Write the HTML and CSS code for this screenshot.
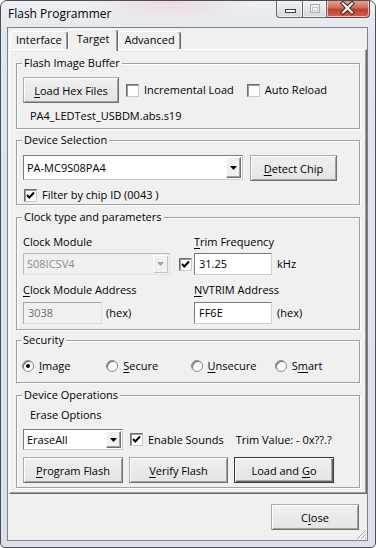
FILE: index.html
```html
<!DOCTYPE html>
<html lang="en">
<head>
    <meta charset="UTF-8" />
    <title>Flash Programmer</title>
    <link rel="stylesheet" href="styles.css">
</head>
<body>

    <div class="window">
        <div class="titlebar">
            <span class="title">Flash Programmer</span>
            <div class="caption">
                <div class="cap cap-min">
                    <svg width="25" height="17" viewBox="0 0 25 17"><rect x="8.5" y="9.5" width="10" height="3" fill="#fff" stroke="#3b4048"/></svg>
                </div>
                <div class="cap cap-max">
                    <svg width="25" height="17" viewBox="0 0 25 17"><rect x="7.5" y="4.5" width="9" height="8" fill="#eef0f3" stroke="#a9aeb5"/><rect x="9.5" y="7.5" width="5" height="3" fill="#fff" stroke="#c3c7cc"/></svg>
                </div>
                <div class="cap cap-close">
                    <svg width="42" height="17" viewBox="0 0 42 17">
                        <path d="M16 3.5 L25 12.5 M25 3.5 L16 12.5" stroke="#4a1e18" stroke-width="4.2" stroke-linecap="square"/>
                        <path d="M16 3.5 L25 12.5 M25 3.5 L16 12.5" stroke="#fff" stroke-width="2.2" stroke-linecap="square"/>
                    </svg>
                </div>
            </div>
        </div>

        <div class="client">
            <div class="tabs">
                <div class="tab">Interface</div>
                <div class="tab active">Target</div>
                <div class="tab">Advanced</div>
            </div>

            <div class="panel">
                <fieldset class="group g-image">
                    <legend>Flash Image Buffer</legend>
                    <div class="row">
                        <button class="btn btn-load"><u>L</u>oad Hex Files</button>
                        <label class="check check-inc"><span class="cb"></span>Incremental Load</label>
                        <label class="check check-auto"><span class="cb"></span>Auto Reload</label>
                    </div>
                    <div class="filename">PA4_LEDTest_USBDM.abs.s19</div>
                </fieldset>

                <fieldset class="group g-device">
                    <legend>Device Selection</legend>
                    <div class="row row-top">
                        <div class="combo combo-device">
                            <span class="combo-text">PA-MC9S08PA4</span>
                            <span class="combo-btn"><svg width="7" height="4" viewBox="0 0 7 4"><path d="M0 0H7L3.5 4Z" fill="#000"/></svg></span>
                        </div>
                        <button class="btn btn-detect"><u>D</u>etect Chip</button>
                    </div>
                    <label class="check check-filter">
                        <span class="cb checked"><svg width="11" height="11" viewBox="0 0 11 11"><path d="M2 5 L4.3 7.5 L9 2.5" fill="none" stroke="#000" stroke-width="1.9"/></svg></span>
                        Filter by chip ID (0043 )
                    </label>
                </fieldset>

                <fieldset class="group g-clock">
                    <legend>Clock type and parameters</legend>
                    <div class="clock-grid">
                        <span class="c-a">Clock Module</span>
                        <span class="c-cd"><u>T</u>rim Frequency</span>

                        <div class="combo combo-clock disabled c-a">
                            <span class="combo-text">S08ICSV4</span>
                            <span class="combo-btn"><svg width="7" height="4" viewBox="0 0 7 4"><path d="M0 0H7L3.5 4Z" fill="#a3a3a3"/></svg></span>
                        </div>
                        <span class="cb checked c-b"><svg width="11" height="11" viewBox="0 0 11 11"><path d="M2 5 L4.3 7.5 L9 2.5" fill="none" stroke="#000" stroke-width="1.9"/></svg></span>
                        <span class="field c-c">31.25</span>
                        <span class="unit unit-khz c-d">kHz</span>

                        <span class="c-a"><u>C</u>lock Module Address</span>
                        <span class="c-cd"><u>N</u>VTRIM Address</span>

                        <div class="c-a addr">
                            <span class="field field-addr disabled">3038</span>
                            <span class="unit">(hex)</span>
                        </div>
                        <span class="field c-c">FF6E</span>
                        <span class="unit c-d">(hex)</span>
                    </div>
                </fieldset>

                <fieldset class="group g-security">
                    <legend>Security</legend>
                    <div class="radios">
                        <label class="radio-item"><span class="radio on"></span><u>I</u>mage</label>
                        <label class="radio-item"><span class="radio"></span><u>S</u>ecure</label>
                        <label class="radio-item"><span class="radio"></span><u>U</u>nsecure</label>
                        <label class="radio-item"><span class="radio"></span>S<u>m</u>art</label>
                    </div>
                </fieldset>

                <fieldset class="group g-ops">
                    <legend>Device Operations</legend>
                    <div class="erase-label">Erase Options</div>
                    <div class="row">
                        <div class="combo combo-erase">
                            <span class="combo-text">EraseAll</span>
                            <span class="combo-btn"><svg width="7" height="4" viewBox="0 0 7 4"><path d="M0 0H7L3.5 4Z" fill="#000"/></svg></span>
                        </div>
                        <label class="check check-sounds">
                            <span class="cb checked"><svg width="11" height="11" viewBox="0 0 11 11"><path d="M2 5 L4.3 7.5 L9 2.5" fill="none" stroke="#000" stroke-width="1.9"/></svg></span>
                            Enable Sounds
                        </label>
                        <span class="trim-value">Trim Value: - 0x??.?</span>
                    </div>
                    <div class="row ops-buttons">
                        <button class="btn btn-op"><u>P</u>rogram Flash</button>
                        <button class="btn btn-op btn-verify"><u>V</u>erify Flash</button>
                        <button class="btn btn-op btn-default">Load and <u>G</u>o</button>
                    </div>
                </fieldset>
            </div>

            <div class="footer">
                <button class="btn btn-close">C<u>l</u>ose</button>
            </div>

            <svg class="grip" width="12" height="12" viewBox="0 0 12 12">
                <path d="M11 2 L2 11 M11 6 L6 11 M11 10 L10 11" stroke="#a7a7a7" stroke-width="1"/>
                <path d="M12 3 L3 12 M12 7 L7 12" stroke="#fff" stroke-width="1"/>
            </svg>
        </div>
    </div>

</body>
</html>
```

FILE: styles.css
```css
body {
    margin: 0;
    background: #fff;
    color: #000;
    font-family: "Open Sans", "Noto Sans", sans-serif;
    font-size: 11px;
}

u {
    text-decoration-thickness: 1px;
    text-underline-offset: 2px;
}

.window {
    width: 376px;
    height: 548px;
    box-sizing: border-box;
    border: 1px solid #4b5057;
    border-radius: 7px 7px 5px 5px;
    overflow: hidden;
    background:
        radial-gradient(ellipse 90px 22px at 170px 0, rgba(236, 205, 222, 0.7), transparent),
        linear-gradient(#eef1f5, #e1e6eb 40px, #dce1e7);
}

/* title bar */
.titlebar {
    height: 26px;
    display: flex;
    align-items: flex-start;
    padding-left: 7px;
}

.title {
    font-size: 12px;
    line-height: 16px;
    margin-top: 5px;
    color: #000;
}

.caption {
    display: flex;
    margin-left: auto;
    margin-right: 5px;
    margin-top: -1px;
    height: 18px;
}

.cap {
    box-sizing: border-box;
    height: 18px;
    border: 1px solid #5f6670;
    border-top: none;
    background: linear-gradient(#f4f6f8, #e3e7ec 50%, #d3d9e0);
    box-shadow: inset 0 0 0 1px rgba(255, 255, 255, 0.6);
}

.cap svg { display: block; }

.cap-min {
    width: 26px;
    border-radius: 0 0 0 4px;
    border-right: none;
}

.cap-max {
    width: 25px;
}

.cap-close {
    width: 43px;
    border-left: none;
    border-color: #7a3a32;
    border-radius: 0 0 4px 0;
    background: linear-gradient(#e9a89d, #d46a5b 45%, #c0402f 55%, #d0624e);
}

/* client area */
.client {
    position: relative;
    margin-left: 6px;
    width: 361px;
    height: 514px;
    box-sizing: border-box;
    border: 1px solid #7d838b;
    background: #f0f0f0;
}

.tabs {
    display: flex;
    align-items: flex-end;
    height: 22px;
    padding-left: 2px;
}

.tab {
    height: 18px;
    box-sizing: border-box;
    margin-bottom: 1px;
    padding: 0 5px;
    line-height: 16px;
    border: 1px solid;
    border-bottom: none;
    border-color: #fff #696969 transparent #fff;
    border-radius: 3px 3px 0 0;
    box-shadow: inset -1px 0 0 #a0a0a0;
    background: #f0f0f0;
}

.tab.active {
    position: relative;
    z-index: 1;
    height: 22px;
    margin-bottom: -1px;
    padding: 0 8px;
    line-height: 17px;
}

.panel {
    width: 358px;
    height: 445px;
    box-sizing: border-box;
    margin-left: 1px;
    margin-top: -1px;
    padding: 6px 0 0 6px;
    border: 1px solid;
    border-color: #fff #696969 #696969 #fff;
    box-shadow: inset -1px -1px 0 #a0a0a0;
}

/* group boxes */
.group {
    width: 344px;
    min-width: 0;
    box-sizing: border-box;
    margin: 0;
    padding: 0 0 0 6px;
    border: 1px solid #a0a0a0;
    box-shadow: inset 1px 1px 0 #fff, 1px 1px 0 #fff;
}

.group legend {
    margin-left: -1px;
    padding: 0 2px;
    line-height: 14px;
    background: #f0f0f0;
}

.g-image { height: 73px; padding-top: 7px; }
.g-device { height: 72px; padding-top: 8px; margin-top: 4px; }
.g-clock { height: 120px; padding-top: 11px; margin-top: 5px; }
.g-security { height: 50px; padding-top: 12px; margin-top: 3px; padding-left: 5px; }
.g-ops { height: 100px; padding-top: 6px; margin-top: 5px; }

.row {
    display: flex;
    align-items: center;
}

.row-top { align-items: flex-start; }

/* buttons */
.btn {
    font: inherit;
    color: #000;
    height: 26px;
    box-sizing: border-box;
    padding: 0;
    border: 1px solid #acacac;
    border-right-color: #6f6f6f;
    border-bottom-color: #6f6f6f;
    background: linear-gradient(#f0f0f0, #e4e4e4);
    box-shadow: inset 1px 1px 0 #fff, inset -1px -1px 0 #a3a3a3;
}

.btn-default {
    border: 1px solid #3a3a3a;
    box-shadow: inset 1px 1px 0 #fff, inset -1px -1px 0 #696969, inset -2px -2px 0 #a3a3a3;
}

.btn-load { width: 96px; }
.btn-detect { width: 87px; margin-left: 7px; }
.btn-op { width: 100px; }
.btn-verify { width: 99px; margin: 0 6px; }
.btn-close { width: 88px; }

/* check boxes */
.check {
    display: flex;
    align-items: center;
    line-height: 14px;
}

.cb {
    display: inline-flex;
    align-items: center;
    justify-content: center;
    width: 13px;
    height: 13px;
    box-sizing: border-box;
    margin-right: 5px;
    border: 1px solid;
    border-color: #6e6e6e #c9c9c9 #c9c9c9 #6e6e6e;
    box-shadow: inset 1px 1px 0 #9a9a9a;
    background: #fff;
}

.cb svg { display: block; }

.check-inc { margin-left: 7px; }
.check-auto { margin-left: 13px; }
.check-filter { margin-top: 7px; margin-left: 1px; }
.check-sounds { margin-left: 7px; }

.filename {
    margin-top: 6px;
    padding-left: 7px;
    line-height: 14px;
}

/* combo boxes and fields */
.combo {
    display: flex;
    box-sizing: border-box;
    border: 1px solid;
    border-color: #7a7a7a #c9c9c9 #c9c9c9 #7a7a7a;
    background: #fff;
}

.combo-text {
    flex: 1;
    display: flex;
    align-items: center;
    padding-left: 3px;
}

.combo-btn {
    width: 15px;
    margin: 1px;
    box-sizing: border-box;
    display: flex;
    align-items: center;
    justify-content: center;
    border: 1px solid;
    border-color: #fff #6f6f6f #6f6f6f #fff;
    box-shadow: inset -1px -1px 0 #a3a3a3;
    background: #f0f0f0;
}

.combo-device { width: 220px; height: 25px; }
.combo-clock { width: 147px; height: 22px; }
.combo-erase { width: 100px; height: 21px; }

.combo.disabled {
    background: #f0f0f0;
    border-color: #b9b9b9 #e3e3e3 #e3e3e3 #b9b9b9;
    color: #8d8d8d;
}

.combo.disabled .combo-btn {
    border-color: #fff #c4c4c4 #c4c4c4 #fff;
    box-shadow: none;
}

.field {
    display: flex;
    align-items: center;
    height: 22px;
    box-sizing: border-box;
    padding-left: 4px;
    border: 1px solid;
    border-color: #7a7a7a #cfcfcf #cfcfcf #7a7a7a;
    background: #fff;
}

.field.disabled {
    background: #f0f0f0;
    color: #6d6d6d;
    border-color: #a8a8a8 #dedede #dedede #a8a8a8;
}

.field-addr { width: 79px; }

.clock-grid {
    display: grid;
    grid-template-columns: 156px 15px 78px auto;
    grid-template-rows: 18px 30px 19px 22px;
    align-items: start;
    line-height: 14px;
}

.c-a { grid-column: 1; }
.c-b { grid-column: 2; margin-top: 5px; }
.c-c { grid-column: 3; }
.c-d { grid-column: 4; }
.c-cd { grid-column: 3 / 5; }

.unit {
    align-self: center;
    margin-left: 5px;
}

.unit-khz {
    align-self: start;
    margin-top: 4px;
}

.addr {
    display: flex;
    align-items: center;
}

.addr .unit { margin-left: 4px; }

/* radio buttons */
.radios {
    display: flex;
    line-height: 14px;
}

.radio-item {
    width: 85px;
    display: flex;
    align-items: center;
}

.radio {
    width: 12px;
    height: 12px;
    box-sizing: border-box;
    margin-right: 5px;
    border: 1px solid #8c8c8c;
    border-radius: 50%;
    background: radial-gradient(circle at 60% 60%, #fff 50%, #e6e6e6);
    box-shadow: inset 1px 1px 0 #6e6e6e;
    display: flex;
    align-items: center;
    justify-content: center;
}

.radio.on::after {
    content: "";
    width: 4px;
    height: 4px;
    border-radius: 50%;
    background: #000;
}

/* device operations */
.erase-label {
    padding-left: 7px;
    line-height: 14px;
    margin-bottom: 7px;
}

.trim-value { margin-left: 12px; }

.ops-buttons { margin-top: 7px; }

/* footer */
.footer {
    display: flex;
    justify-content: flex-end;
    padding: 10px 8px 0 0;
}

.grip {
    position: absolute;
    right: 0;
    bottom: 0;
}
```
